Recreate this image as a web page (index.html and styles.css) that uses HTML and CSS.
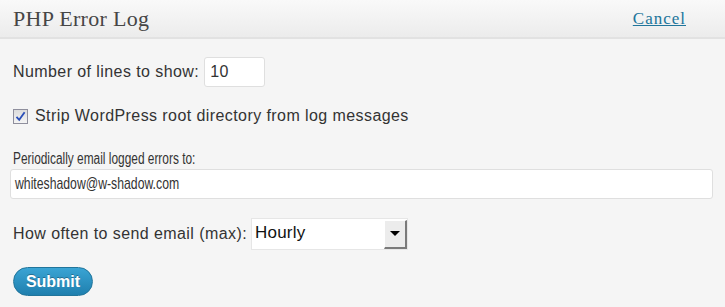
FILE: index.html
```html
<!DOCTYPE html>
<html>

<head>
    <title>PHP Error Log</title>
    <link rel="stylesheet" href="styles.css">
</head>

<body>
    <div class="panel-header">
        <h2>PHP Error Log</h2>
        <a href="#" class="cancel">Cancel</a>
    </div>

    <form class="panel-body">
        <div class="row lines-row">
            <label for="lines">Number of lines to show:</label>
            <input type="text" id="lines" class="small-input" value="10">
        </div>

        <div class="row check-row">
            <label class="check">
                <span class="checkbox">
                    <svg width="11" height="11" viewBox="0 0 11 11">
                        <path d="M1.5 5.8 L4.2 8.8 L9.6 1.2" fill="none" stroke="#2b4fb8" stroke-width="1.8" />
                    </svg>
                </span>
                Strip WordPress root directory from log messages
            </label>
        </div>

        <div class="row stacked">
            <label for="email"><span class="narrow">Periodically email logged errors to:</span></label>
            <div class="wide-input" id="email" contenteditable="true"><span class="narrow email-value">whiteshadow@w-shadow.com</span></div>
        </div>

        <div class="row freq-row">
            <label for="freq">How often to send email (max):</label>
            <div class="select" id="freq">
                <span class="select-value">Hourly</span>
                <span class="select-arrow"></span>
            </div>
        </div>

        <div class="row submit-row">
            <button type="button" class="submit">Submit</button>
        </div>
    </form>
</body>

</html>
```

FILE: styles.css
```css
body {
    margin: 0;
    background-color: #f5f5f5;
    color: #333;
    font-family: "Liberation Sans", Arial, sans-serif;
    font-size: 16px;
    letter-spacing: 0.42px;
}

/* Header */
.panel-header {
    display: flex;
    align-items: center;
    justify-content: space-between;
    height: 37px;
    padding: 0 39px 0 13px;
    background: linear-gradient(to bottom, #f9f9f9, #ececec);
    border-bottom: 2px solid #e2e2e2;
    letter-spacing: 0;
}

.panel-header h2 {
    margin: 0;
    font-family: "Liberation Serif", Georgia, serif;
    font-weight: normal;
    font-size: 22px;
    letter-spacing: 0.3px;
    color: #464646;
}

.cancel {
    font-family: "Liberation Serif", Georgia, serif;
    font-size: 17px;
    letter-spacing: 1px;
    color: #21759b;
}

/* Form */
.panel-body {
    padding: 18px 12px 0 13px;
}

.row {
    display: flex;
    align-items: center;
}

.row label {
    margin-right: 5px;
}

.check-row {
    margin-top: 20px;
}

.stacked {
    flex-direction: column;
    align-items: flex-start;
    margin-top: 25px;
}

.stacked label {
    margin-bottom: 1px;
}

/* these two texts are squeezed in the original */
.narrow {
    display: inline-block;
    letter-spacing: 0;
    white-space: nowrap;
    transform: scaleX(0.743);
    transform-origin: left center;
}

.freq-row {
    margin-top: 19px;
}

.freq-row label {
    margin-right: 4px;
}

.submit-row {
    margin-top: 17px;
}

.small-input,
.wide-input {
    box-sizing: border-box;
    height: 30px;
    padding: 3px 6px 3px 5px;
    border: 1px solid #dfdfdf;
    border-radius: 3px;
    background: #fff;
    font-family: inherit;
    font-size: 16px;
    letter-spacing: inherit;
    color: #333;
}

.small-input {
    width: 61px;
}

.wide-input {
    display: flex;
    align-items: center;
    margin-left: -3px;
    width: 703px;
    padding-left: 4px;
    font-size: 17px;
    outline: none;
}

.email-value {
    transform: scaleX(0.72);
}

.check {
    display: flex;
    align-items: center;
    gap: 7px;
}

.checkbox {
    display: flex;
    align-items: center;
    justify-content: center;
    box-sizing: border-box;
    width: 15px;
    height: 15px;
    border: 1px solid #8f8f9d;
    background: linear-gradient(to bottom, #dcdcdc, #f4f4f4);
}

.select {
    display: flex;
    box-sizing: border-box;
    width: 157px;
    height: 32px;
    border: 1px solid #e6e6e6;
    background: #fff;
}

.select-value {
    flex: 1;
    padding: 4px 3px;
    color: #111;
    font-size: 17px;
    letter-spacing: 0.2px;
}

.select-arrow {
    position: relative;
    width: 20px;
    margin: 1px 0 0 0;
    background: #ececec;
    border-right: 2px solid #7a7a7a;
    border-bottom: 2px solid #7a7a7a;
    border-top: 1px solid #fff;
    border-left: 1px solid #fff;
}

.select-arrow::after {
    content: "";
    position: absolute;
    left: 5px;
    top: 10px;
    border-left: 5px solid transparent;
    border-right: 5px solid transparent;
    border-top: 5px solid #000;
}

.submit {
    width: 80px;
    height: 29px;
    border: 1px solid #21759b;
    border-radius: 15px;
    background: linear-gradient(to bottom, #3aa4d4, #1f7fae);
    color: #fff;
    font-family: inherit;
    font-weight: bold;
    font-size: 16px;
    letter-spacing: 0;
    text-shadow: 0 -1px 0 rgba(0, 0, 0, 0.3);
}
```
